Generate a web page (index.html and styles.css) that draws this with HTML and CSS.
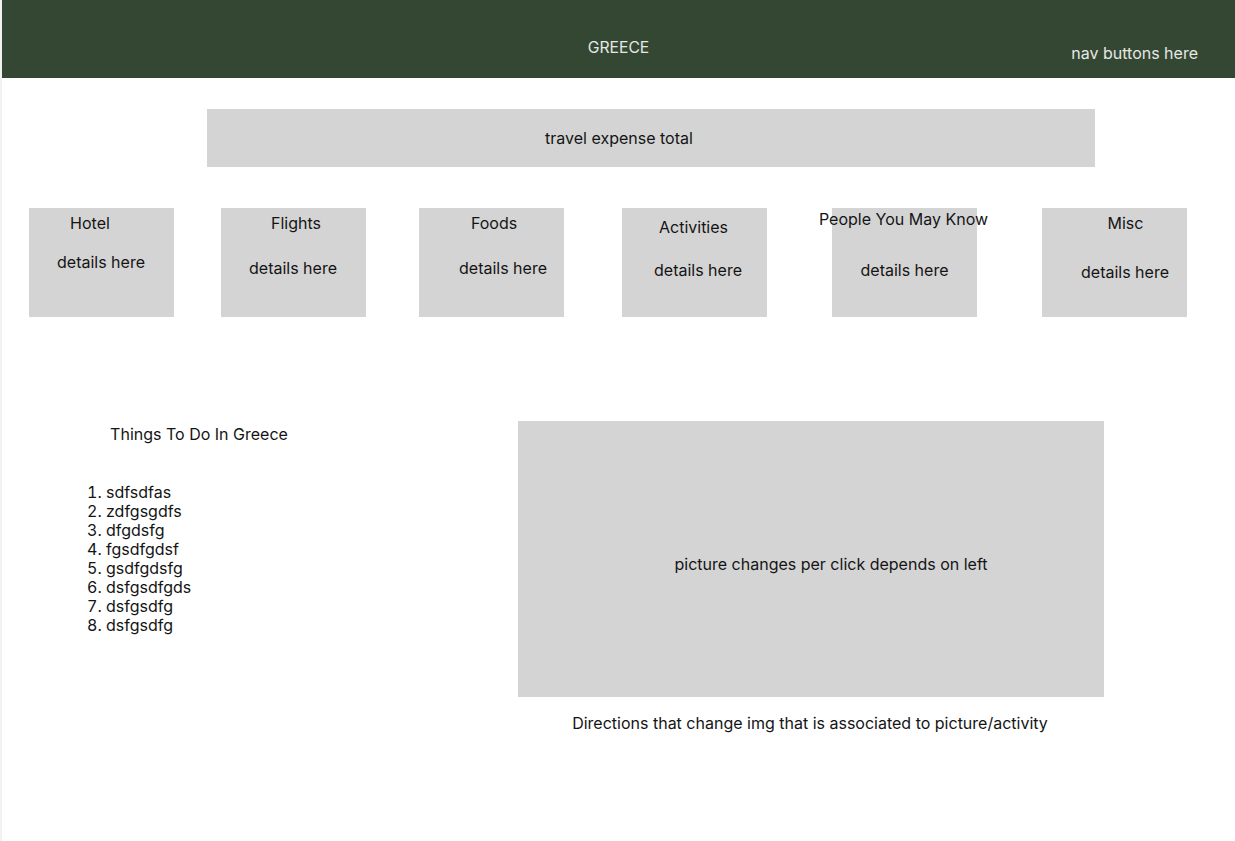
FILE: index.html
```html
<!DOCTYPE html>
<html lang="en">
<head>
<meta charset="utf-8">
<title>Greece</title>
<link rel="stylesheet" href="styles.css">
</head>
<body>
<div class="frame">
  <header class="topbar">
    <div></div>
    <div class="brand">GREECE</div>
    <div class="nav">nav buttons here</div>
  </header>

  <section class="expense">travel expense total</section>

  <section class="cards">
    <div class="card card-hotel"><div class="c-title">Hotel</div><div class="c-det">details here</div></div>
    <div class="card card-flights"><div class="c-title">Flights</div><div class="c-det">details here</div></div>
    <div class="card card-foods"><div class="c-title">Foods</div><div class="c-det">details here</div></div>
    <div class="card card-act"><div class="c-title">Activities</div><div class="c-det">details here</div></div>
    <div class="card card-people"><div class="c-title">People You May Know</div><div class="c-det">details here</div></div>
    <div class="card card-misc"><div class="c-title">Misc</div><div class="c-det">details here</div></div>
  </section>

  <section class="bottom">
    <div class="todo">
      <div class="todo-title">Things To Do In Greece</div>
      <ol class="todo-list">
        <li>sdfsdfas</li>
        <li>zdfgsgdfs</li>
        <li>dfgdsfg</li>
        <li>fgsdfgdsf</li>
        <li>gsdfgdsfg</li>
        <li>dsfgsdfgds</li>
        <li>dsfgsdfg</li>
        <li>dsfgsdfg</li>
      </ol>
    </div>
    <div class="viewer">
      <div class="picture"><span>picture changes per click depends on left</span></div>
      <div class="caption">Directions that change img that is associated to picture/activity</div>
    </div>
  </section>
</div>
</body>
</html>
```

FILE: styles.css
```css
html, body {
  margin: 0;
  padding: 0;
}
body {
  background: #f1f1f1;
  font-family: Inter, "Noto Sans", "Liberation Sans", sans-serif;
  font-size: 16px;
  line-height: 19px;
  color: #141414;
}
.frame {
  margin-left: 2px;
  background: #ffffff;
  min-height: 841px;
  overflow: hidden;
}

/* header */
.topbar {
  height: 78px;
  background: #334733;
  display: grid;
  grid-template-columns: 1fr auto 1fr;
  color: #e6e8e4;
}
.brand {
  font-size: 15.7px;
  line-height: 18px;
  padding-top: 39px;
  text-align: center;
}
.nav {
  justify-self: end;
  padding-top: 44px;
  padding-right: 37px;
}

/* expense */
.expense {
  margin: 31px 0 0 205px;
  width: 888px;
  height: 58px;
  background: #d4d4d4;
  display: flex;
  align-items: center;
  justify-content: center;
  padding-right: 64px;
  box-sizing: border-box;
}

/* cards */
.cards {
  display: flex;
  margin-top: 41px;
}
.card {
  width: 145px;
  height: 109px;
  background: #d4d4d4;
  display: flex;
  flex-direction: column;
  align-items: center;
  flex: none;
}
.c-title, .c-det {
  white-space: nowrap;
}
.card-hotel { margin-left: 27px; }
.card-hotel .c-title { margin: 6px 11.5px 0 -11.5px; }
.card-hotel .c-det { margin: 20px 0.5px 0 -0.5px; }

.card-flights { margin-left: 47px; }
.card-flights .c-title { margin: 6px -2.5px 0 2.5px; }
.card-flights .c-det { margin: 26px 0.5px 0 -0.5px; }

.card-foods { margin-left: 53px; }
.card-foods .c-title { margin: 6px -2.5px 0 2.5px; }
.card-foods .c-det { margin: 26px -11.5px 0 11.5px; }

.card-act { margin-left: 58px; }
.card-act .c-title { margin: 10px 1px 0 -1px; }
.card-act .c-det { margin: 24px -3.5px 0 3.5px; }

.card-people { margin-left: 65px; }
.card-people .c-title { margin: 2px 1px 0 -1px; }
.card-people .c-det { margin-top: 32px; }

.card-misc { margin-left: 65px; }
.card-misc .c-title { margin: 6px -11px 0 11px; }
.card-misc .c-det { margin: 30px -10.5px 0 10.5px; }

/* bottom */
.bottom {
  display: flex;
  margin-top: 104px;
}
.todo {
  width: 516px;
  flex: none;
}
.todo-title {
  width: 394px;
  text-align: center;
  margin-top: 4px;
}
.todo-list {
  margin: 39px 0 0 0;
  padding-left: 104px;
}
.viewer {
  width: 586px;
  flex: none;
}
.picture {
  height: 276px;
  background: #d4d4d4;
  display: flex;
  align-items: center;
  justify-content: center;
  padding: 10px 0 0 40px;
  box-sizing: border-box;
}
.caption {
  margin-top: 17px;
  text-align: center;
  margin-right: 2px;
}
```
